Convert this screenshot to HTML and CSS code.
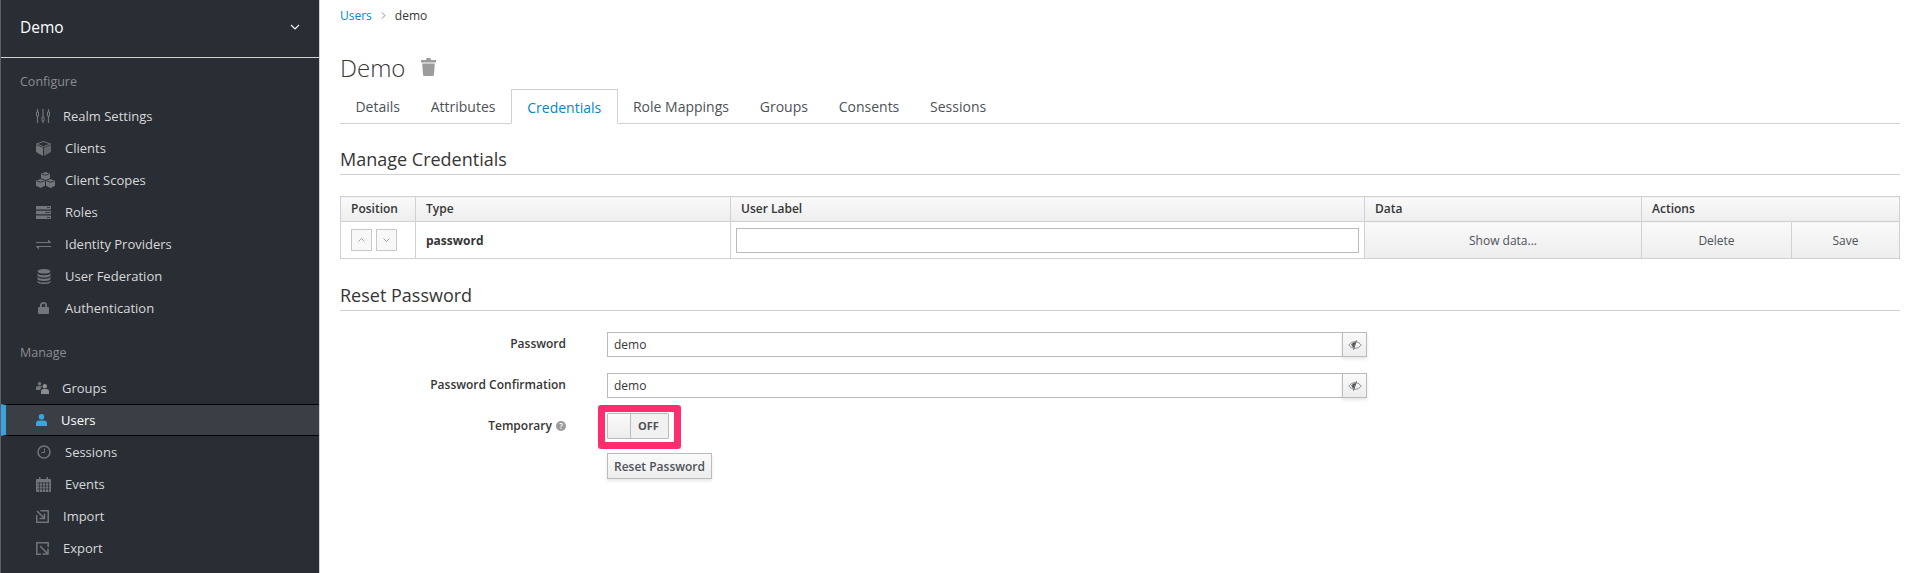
FILE: index.html
```html
<!DOCTYPE html>
<html>
  <head>
    <meta charset="UTF-8">
    <title>Demo - Credentials</title>
    <link rel="stylesheet" href="styles.css">
  </head>
  <body>
    <aside class="sidebar">
      <div class="realm">
        <span>Demo</span>
        <svg class="realm-arrow" width="10" height="6" viewBox="0 0 10 6"><path d="M1 1l4 4 4-4" fill="none" stroke="#fff" stroke-width="1.2"/></svg>
      </div>

      <div class="nav-title nav-title-first">Configure</div>
      <ul class="nav">
        <li class="nav-item"><span class="nav-icon w27"><svg width="14" height="14" viewBox="0 0 14 14"><path d="M1.500 0v3M1.500 7v7M7 0v8M7 12v2M12.500 0v3M12.500 7v7" stroke="#72767b" stroke-width="1.200"/><path d="M.5 3h2v4h-2zM6 8h2v4H6zM11.500 3h2v4h-2z" fill="none" stroke="#72767b"/></svg></span>Realm Settings</li>
        <li class="nav-item"><span class="nav-icon"><svg width="15" height="15" viewBox="0 0 15 15"><path d="M7.500.5L14.500 3 7.500 5.700.5 3z" fill="none" stroke="#72767b"/><path d="M0 4l7 2.700V15L0 11z" fill="#72767b"/><path d="M15 4L8 6.700V15l7-4z" fill="#62666b"/></svg></span>Clients</li>
        <li class="nav-item"><span class="nav-icon"><svg width="19" height="16" viewBox="0 0 19 16"><path d="M9.500 0l4.500 1.700v4.600L9.500 8 5 6.300V1.700z" fill="#72767b"/><path d="M4.500 7L9 8.700v5L4.500 16 0 13.700v-5zM14.500 7L19 8.700v5L14.500 16 10 13.700v-5z" fill="#72767b"/><path d="M6 2l3.500 1.300L13 2M1 9l3.500 1.300L8 9M11 9l3.500 1.300L18 9" fill="none" stroke="#292e34" stroke-width=".9"/></svg></span>Client Scopes</li>
        <li class="nav-item"><span class="nav-icon"><svg width="15" height="13" viewBox="0 0 15 13"><path d="M0 0h15v3.500H0zM0 4.700h15v3.600H0zM0 9.500h15V13H0z" fill="#72767b"/><path d="M11 1.500h3M9 6.500h5M11 11.500h3" stroke="#292e34" stroke-width=".8"/></svg></span>Roles</li>
        <li class="nav-item"><span class="nav-icon"><svg width="15" height="11" viewBox="0 0 15 11"><path d="M0 3h12V0.500l3 3V4H0zM15 7H0v.5l3 3V8h12z" fill="#72767b"/></svg></span>Identity Providers</li>
        <li class="nav-item"><span class="nav-icon"><svg width="14" height="15" viewBox="0 0 14 15" class="icon-in"><ellipse cx="7" cy="2.300" rx="6.500" ry="2.300" fill="#72767b"/><path d="M.5 4c0 1.300 2.900 2.300 6.500 2.300S13.500 5.300 13.500 4v2.200c0 1.300-2.900 2.300-6.500 2.300S.5 7.500.5 6.200zM.5 7.600c0 1.300 2.900 2.300 6.500 2.300s6.500-1 6.500-2.300v2.200c0 1.300-2.900 2.300-6.500 2.300S.5 11.100.5 9.800zM.5 11.200c0 1.300 2.900 2.300 6.500 2.300s6.500-1 6.500-2.300v1.500C13.500 14 10.600 15 7 15S.5 14 .5 12.700z" fill="#72767b"/></svg></span>User Federation</li>
        <li class="nav-item"><span class="nav-icon"><svg width="11" height="12" viewBox="0 0 11 12" class="icon-lock"><path d="M2 5V3.500a3.500 3.500 0 0 1 7 0V5h1a1 1 0 0 1 1 1v5a1 1 0 0 1-1 1H1a1 1 0 0 1-1-1V6a1 1 0 0 1 1-1zm1.800 0h3.400V3.500a1.700 1.700 0 0 0-3.400 0z" fill="#72767b"/></svg></span>Authentication</li>
      </ul>

      <div class="nav-title">Manage</div>
      <ul class="nav">
        <li class="nav-item"><span class="nav-icon w26"><svg width="13" height="12" viewBox="0 0 13 12"><circle cx="3.500" cy="1.800" r="1.800" fill="#72767b"/><path d="M0 8V5.800C0 4.800 1 4 2 4h3c.5 0 .8.300 1 .7C5 5.500 4.500 6.500 4.300 8z" fill="#72767b"/><circle cx="8.800" cy="4.200" r="2.200" fill="#8b8d8f"/><path d="M5 12V9.500C5 8 6 7 7 7h3.500c1.300 0 2.500 1 2.500 2.500V12z" fill="#8b8d8f"/></svg></span>Groups</li>
        <li class="nav-item nav-item-active"><span class="nav-icon w25"><svg width="11" height="12" viewBox="0 0 11 12"><circle cx="5.500" cy="2.800" r="2.800" fill="#39a5dc"/><path d="M0 12V9.500C0 7.800 1.200 6.500 3 6.500h5c1.800 0 3 1.300 3 3V12z" fill="#39a5dc"/></svg></span>Users</li>
        <li class="nav-item"><span class="nav-icon"><svg width="14" height="14" viewBox="0 0 14 14" class="icon-in"><circle cx="7" cy="7" r="6" fill="none" stroke="#72767b" stroke-width="1.500"/><path d="M7.500 3.500v4H4.500" fill="none" stroke="#72767b"/></svg></span>Sessions</li>
        <li class="nav-item"><span class="nav-icon"><svg width="15" height="15" viewBox="0 0 15 15"><path d="M3 0h1.500v2H10.500V0H12v2h2a1 1 0 0 1 1 1v11a1 1 0 0 1-1 1H1a1 1 0 0 1-1-1V3a1 1 0 0 1 1-1h2z" fill="#72767b"/><path d="M1 6h13M1 9h13M1 12h13M3.500 5v10M6.500 5v10M9.500 5v10M12.500 5v10" stroke="#292e34" stroke-width=".7"/></svg></span>Events</li>
        <li class="nav-item"><span class="nav-icon w27"><svg width="13" height="13" viewBox="0 0 13 13"><path d="M4.500.8h7.700v11.400H.8V5" fill="none" stroke="#72767b" stroke-width="1.500"/><path d="M1 1l7 7M8.500 3.500v5h-5" fill="none" stroke="#72767b" stroke-width="1.500"/></svg></span>Import</li>
        <li class="nav-item"><span class="nav-icon w27"><svg width="13" height="13" viewBox="0 0 13 13"><path d="M12.200 5V.8H.8v11.400H5" fill="none" stroke="#72767b" stroke-width="1.500"/><path d="M4 4l7.500 7.500M12 6.500v5.500H6.500" fill="none" stroke="#72767b" stroke-width="1.500"/></svg></span>Export</li>
      </ul>
    </aside>

    <main class="content">
      <div class="breadcrumb">
        <a href="#">Users</a>
        <svg width="5" height="7" viewBox="0 0 5 7"><path d="M1 .5l3 3-3 3" fill="none" stroke="#8b8d8f"/></svg>
        <span>demo</span>
      </div>

      <h1 class="page-title">Demo
        <svg width="15" height="18" viewBox="0 0 15 18"><path d="M5.500 0h4l.5 2h5v2.500H0V2h5zM1.200 5.500h12.600l-.8 11a1.500 1.500 0 0 1-1.500 1.500H3.500A1.500 1.500 0 0 1 2 16.500z" fill="#9c9c9c"/></svg>
      </h1>

      <ul class="tabs">
        <li>Details</li>
        <li>Attributes</li>
        <li class="tab-active">Credentials</li>
        <li>Role Mappings</li>
        <li>Groups</li>
        <li>Consents</li>
        <li>Sessions</li>
      </ul>

      <h2 class="section-title">Manage Credentials</h2>

      <table class="cred-table">
        <colgroup>
          <col class="col-position">
          <col class="col-type">
          <col class="col-label">
          <col class="col-data">
          <col class="col-delete">
          <col>
        </colgroup>
        <thead>
          <tr>
            <th>Position</th>
            <th>Type</th>
            <th>User Label</th>
            <th>Data</th>
            <th colspan="2">Actions</th>
          </tr>
        </thead>
        <tbody>
          <tr>
            <td class="cell-position">
              <span class="arrow-btn"><svg width="7" height="4" viewBox="0 0 7 4"><path d="M.5 3.500l3-3 3 3" fill="none" stroke="#8b8d8f" stroke-width=".8"/></svg></span>
              <span class="arrow-btn"><svg width="7" height="4" viewBox="0 0 7 4"><path d="M.5.500l3 3 3-3" fill="none" stroke="#8b8d8f" stroke-width=".8"/></svg></span>
            </td>
            <td class="cell-type">password</td>
            <td class="cell-label"><input type="text" class="label-input"></td>
            <td class="cell-action">Show data...</td>
            <td class="cell-action">Delete</td>
            <td class="cell-action">Save</td>
          </tr>
        </tbody>
      </table>

      <h2 class="section-title section-reset">Reset Password</h2>

      <form class="reset-form">
        <div class="form-row form-row-first">
          <label for="password">Password</label>
          <div class="input-group">
            <input type="text" id="password" value="demo">
            <button type="button" class="eye-btn"><svg width="14" height="10" viewBox="0 0 14 10"><path d="M.8 5C2.200 3 4.400 1.700 7 1.700S11.800 3 13.200 5C11.800 7 9.600 8.300 7 8.300S2.200 7 .8 5z" fill="none" stroke="#72767b" stroke-width=".8"/><path d="M7.500 2.500a2.700 2.700 0 0 0-2 5z" fill="#4d5258"/><path d="M3 4.200L5 3 4.500 7z" fill="#72767b"/><path d="M8.500.3L5.500 9.700" stroke="#4d5258" stroke-width=".9"/></svg></button>
          </div>
        </div>
        <div class="form-row">
          <label for="confirm">Password Confirmation</label>
          <div class="input-group">
            <input type="text" id="confirm" value="demo">
            <button type="button" class="eye-btn"><svg width="14" height="10" viewBox="0 0 14 10"><path d="M.8 5C2.200 3 4.400 1.700 7 1.700S11.800 3 13.200 5C11.800 7 9.600 8.300 7 8.300S2.200 7 .8 5z" fill="none" stroke="#72767b" stroke-width=".8"/><path d="M7.500 2.500a2.700 2.700 0 0 0-2 5z" fill="#4d5258"/><path d="M3 4.200L5 3 4.500 7z" fill="#72767b"/><path d="M8.500.3L5.500 9.700" stroke="#4d5258" stroke-width=".9"/></svg></button>
          </div>
        </div>
        <div class="form-row form-row-toggle">
          <label>Temporary <span class="help">?</span></label>
          <div class="toggle">
            <span class="toggle-knob"></span>
            <span class="toggle-text">OFF</span>
            <span class="toggle-highlight"></span>
          </div>
        </div>
        <button type="button" class="reset-btn">Reset Password</button>
      </form>
    </main>
  </body>
</html>
```

FILE: styles.css
```css
* {
  box-sizing: border-box;
  margin: 0;
  padding: 0;
}

body {
  display: flex;
  height: 573px;
  overflow: hidden;
  font-family: "Open Sans", sans-serif;
  font-size: 12px;
  color: #363636;
  background-color: #fff;
}

ul {
  list-style: none;
}

/* sidebar */
.sidebar {
  width: 320px;
  flex-shrink: 0;
  background-color: #292e34;
  border-left: 1px solid #5c6066;
  border-right: 1px solid #d1d1d1;
}

.realm {
  display: flex;
  justify-content: space-between;
  align-items: center;
  height: 58px;
  padding: 0 19px 4px 19px;
  border-bottom: 1px solid #d1d1d1;
  color: #fff;
  font-size: 15.500px;
}

.nav-title {
  height: 24px;
  margin: 17px 0 7px 19px;
  line-height: 24px;
  color: #8b8d8f;
  font-size: 12.500px;
}

.nav-title-first {
  margin-top: 12px;
  margin-bottom: 6px;
}

.nav-item {
  display: flex;
  align-items: center;
  height: 32px;
  padding-left: 35px;
  color: #d8d8d8;
  font-size: 13px;
}

.nav-icon {
  display: flex;
  align-items: center;
  width: 29px;
  flex-shrink: 0;
}

.w27 {
  width: 27px;
}

.w26 {
  width: 26px;
}

.w25 {
  width: 25px;
}

.icon-in {
  margin-left: 1px;
}

.icon-lock {
  margin-left: 2px;
}

.nav-item-active {
  background-color: #393f44;
  border-top: 1px solid #030303;
  border-bottom: 1px solid #030303;
  border-left: 5px solid #39a5dc;
  padding-left: 30px;
  color: #fff;
}

/* main area */
.content {
  flex: 1;
  padding: 0 17px 0 20px;
}

.breadcrumb {
  display: flex;
  align-items: center;
  gap: 9px;
  height: 30px;
}

.breadcrumb a {
  color: #0088ce;
  text-decoration: none;
}

.page-title {
  display: flex;
  align-items: center;
  gap: 16px;
  height: 34px;
  margin-top: 20px;
  font-size: 24px;
  font-weight: 300;
  color: #363636;
}

.tabs {
  display: flex;
  height: 35px;
  margin-top: 5px;
  border-bottom: 1px solid #d1d1d1;
  font-size: 14px;
  color: #4d5258;
}

.tabs li {
  padding: 0 15.400px;
  line-height: 35px;
}

.tab-active {
  height: 35px;
  background-color: #fff;
  border: 1px solid #d1d1d1;
  border-bottom: 1px solid #fff;
  color: #0088ce;
}

.section-title {
  height: 35px;
  margin-top: 16px;
  border-bottom: 1px solid #d1d1d1;
  font-size: 18px;
  font-weight: 400;
  line-height: 38px;
  color: #363636;
}

.section-reset {
  margin-top: 17px;
}

/* credentials table */
.cred-table {
  width: 100%;
  margin-top: 21px;
  table-layout: fixed;
  border-collapse: collapse;
  border: 1px solid #d1d1d1;
}

.col-position {
  width: 75px;
}

.col-type {
  width: 315px;
}

.col-label {
  width: 634px;
}

.col-data {
  width: 277px;
}

.col-delete {
  width: 150px;
}

.cred-table th {
  height: 25px;
  padding: 0 10px 2px;
  background: linear-gradient(#fafafa, #ededed);
  border: 1px solid #d1d1d1;
  text-align: left;
  font-weight: 600;
}

.cred-table td {
  height: 37px;
  border: 1px solid #d1d1d1;
}

.cell-position {
  padding-left: 10px;
}

.arrow-btn {
  display: inline-flex;
  align-items: center;
  justify-content: center;
  width: 21px;
  height: 22px;
  margin-right: 1px;
  vertical-align: middle;
  background: #f8f8f8;
  border: 1px solid #c8c8c8;
}

.cell-type {
  padding-left: 10px;
  font-weight: 700;
}

.cell-label {
  padding: 0 5px;
}

.label-input {
  display: block;
  width: 100%;
  height: 25px;
  border: 1px solid #bbb;
}

.cred-table .cell-action {
  background: linear-gradient(#fafafa, #ededed);
  text-align: center;
  color: #4d5258;
}

/* reset password form */
.reset-form {
  margin-top: 21px;
}

.form-row {
  display: flex;
  align-items: center;
  height: 25px;
  margin-bottom: 15px;
}

.form-row-first {
  margin-bottom: 16px;
}

.form-row label {
  width: 226px;
  margin-right: 41px;
  padding-bottom: 2px;
  text-align: right;
  font-weight: 600;
}

.input-group {
  display: flex;
  width: 760px;
}

.input-group input {
  flex: 1;
  height: 25px;
  padding: 0 6px;
  border: 1px solid #bbb;
  border-right: none;
  font-family: inherit;
  font-size: 12px;
  color: #363636;
}

.eye-btn {
  display: flex;
  align-items: center;
  justify-content: center;
  width: 25px;
  height: 25px;
  background: linear-gradient(#fafafa, #ededed);
  border: 1px solid #bbb;
  box-shadow: 0 2px 3px rgba(3, 3, 3, 0.1);
}

.form-row-toggle {
  height: 26px;
  margin-bottom: 14px;
}

.help {
  display: inline-block;
  width: 10px;
  height: 10px;
  margin-left: 1px;
  border-radius: 50%;
  background-color: #9c9c9c;
  color: #fff;
  font-size: 8px;
  line-height: 10px;
  text-align: center;
  vertical-align: 1px;
}

.toggle {
  position: relative;
  display: flex;
  width: 62px;
  height: 26px;
  border: 1px solid #bbb;
  border-radius: 1px;
}

.toggle-knob {
  width: 23px;
  background: linear-gradient(#fafafa, #ededed);
  border-right: 1px solid #bbb;
}

.toggle-text {
  flex: 1;
  padding-right: 2px;
  background: #f1f1f1;
  text-align: center;
  font-size: 11px;
  font-weight: 700;
  line-height: 24px;
  color: #4d5258;
}

/* annotation drawn over the screenshot */
.toggle-highlight {
  position: absolute;
  top: -9px;
  right: -13px;
  bottom: -11px;
  left: -10px;
  border: 7px solid #ff2d6f;
  border-radius: 3px;
}

.reset-btn {
  display: block;
  width: 105px;
  height: 26px;
  margin-left: 267px;
  background: linear-gradient(#fafafa, #ededed);
  border: 1px solid #bbb;
  box-shadow: 0 2px 3px rgba(3, 3, 3, 0.1);
  font-family: inherit;
  font-size: 12px;
  font-weight: 600;
  color: #4d5258;
}
```
